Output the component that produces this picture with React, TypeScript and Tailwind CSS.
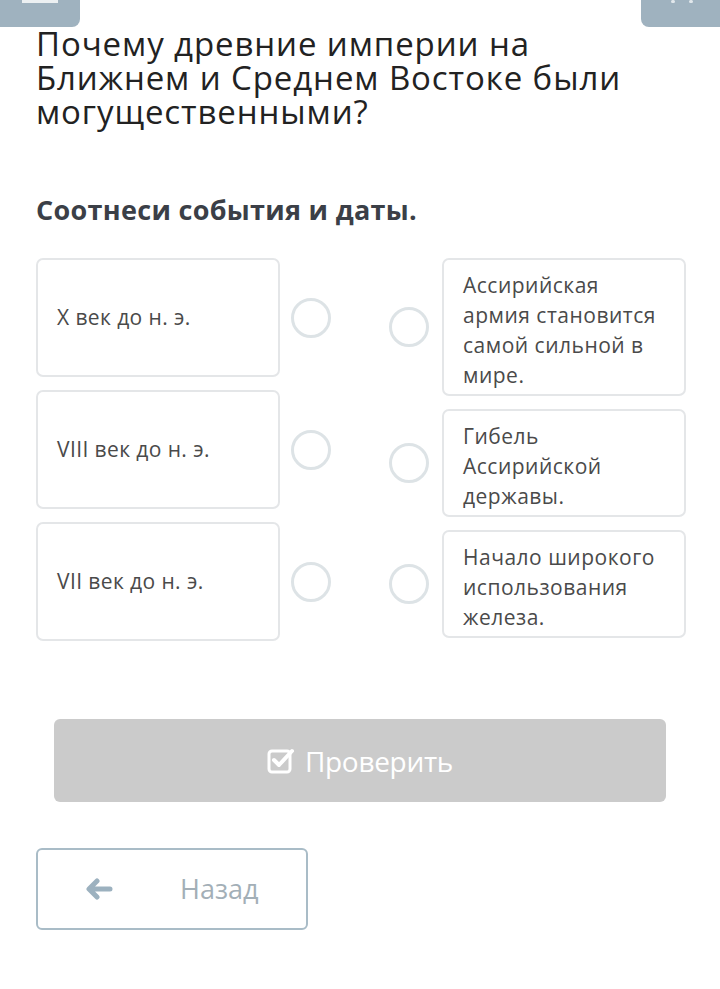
import React from "react";

function Circle() {
  return <div className="w-[40px] h-[40px] rounded-full border-[3px] border-[#dde3e6] bg-white" />;
}

export default function App() {
  const left = ["X век до н. э.", "VIII век до н. э.", "VII век до н. э."];
  const right = [
    { h: "h-[138px]", lines: ["Ассирийская", "армия становится", "самой сильной в", "мире."] },
    { h: "h-[108px]", lines: ["Гибель", "Ассирийской", "державы."] },
    { h: "h-[108px]", lines: ["Начало широкого", "использования", "железа."] },
  ];
  return (
    <div className="relative w-[720px] h-[989px] bg-white overflow-hidden" style={{ fontFamily: '"Open Sans", sans-serif' }}>
      <div className="absolute left-0 top-0 w-[80px] h-[27px] bg-[#9fb2bf] rounded-br-[8px]">
        <div className="absolute left-[22px] top-0 w-[36px] h-[3px] bg-white/80" />
      </div>
      <div className="absolute right-0 top-0 w-[79px] h-[27px] bg-[#9fb2bf] rounded-bl-[8px]">
        <div className="absolute left-[30px] top-0 w-[4px] h-[3px] bg-white/70 rounded-full" />
        <div className="absolute left-[48px] top-0 w-[4px] h-[3px] bg-white/70 rounded-full" />
      </div>

      <div className="pt-[27px] px-[36px]">
        <h1 className="text-[33px] leading-[34px] text-[#222] font-normal tracking-[0.9px] whitespace-nowrap">
          Почему древние империи на<br />Ближнем и Среднем Востоке были<br />могущественными?
        </h1>
        <h2 className="mt-[63px] text-[27px] leading-[36px] font-bold text-[#3b3f47] tracking-[0.3px]">
          Соотнеси события и даты.
        </h2>

        <div className="mt-[30px] flex">
          <div className="flex flex-col gap-[13px]">
            {left.map((t) => (
              <div key={t} className="flex items-center">
                <div className="w-[244px] h-[119px] border-2 border-[#e4e6e8] rounded-[7px] flex items-center pl-[19px] text-[21px] tracking-[0.4px] text-[#4a4a4a]">
                  {t}
                </div>
                <div className="ml-[11px]"><Circle /></div>
              </div>
            ))}
          </div>
          <div className="ml-[58px] flex flex-col gap-[13px]">
            {right.map((c, i) => (
              <div key={i} className="flex items-center">
                <Circle />
                <div className={`ml-[13px] w-[244px] ${c.h} border-2 border-[#e4e6e8] rounded-[7px] pl-[19px] pr-[10px] pt-[10px] text-[21px] leading-[30px] tracking-[0.5px] text-[#4a4a4a] whitespace-nowrap`}>
                  {c.lines.map((l) => (
                    <div key={l}>{l}</div>
                  ))}
                </div>
              </div>
            ))}
          </div>
        </div>
      </div>

      <div className="mt-[78px] mx-[54px] h-[83px] bg-[#cbcbcb] rounded-[6px] flex items-center justify-center text-white text-[28px] gap-[10px]">
        <svg width="28" height="26" viewBox="0 0 28 26" fill="none">
          <rect x="2" y="3" width="21" height="21" rx="3" stroke="white" strokeWidth="3" />
          <path d="M7 12 L12 17 L25 3" stroke="white" strokeWidth="4" strokeLinecap="round" strokeLinejoin="round" />
        </svg>
        <span className="tracking-[-0.3px]">Проверить</span>
      </div>

      <div className="mt-[46px] ml-[36px] w-[272px] h-[82px] border-2 border-[#a9bcc7] rounded-[6px] flex items-center">
        <svg className="ml-[47px]" width="28" height="22" viewBox="0 0 28 22" fill="none">
          <path d="M25 11 H5 M12 3 L4 11 L12 19" stroke="#9cb1bf" strokeWidth="5" strokeLinecap="round" strokeLinejoin="round" />
        </svg>
        <span className="ml-[67px] text-[27px] text-[#a3afb7]">Назад</span>
      </div>
    </div>
  );
}
